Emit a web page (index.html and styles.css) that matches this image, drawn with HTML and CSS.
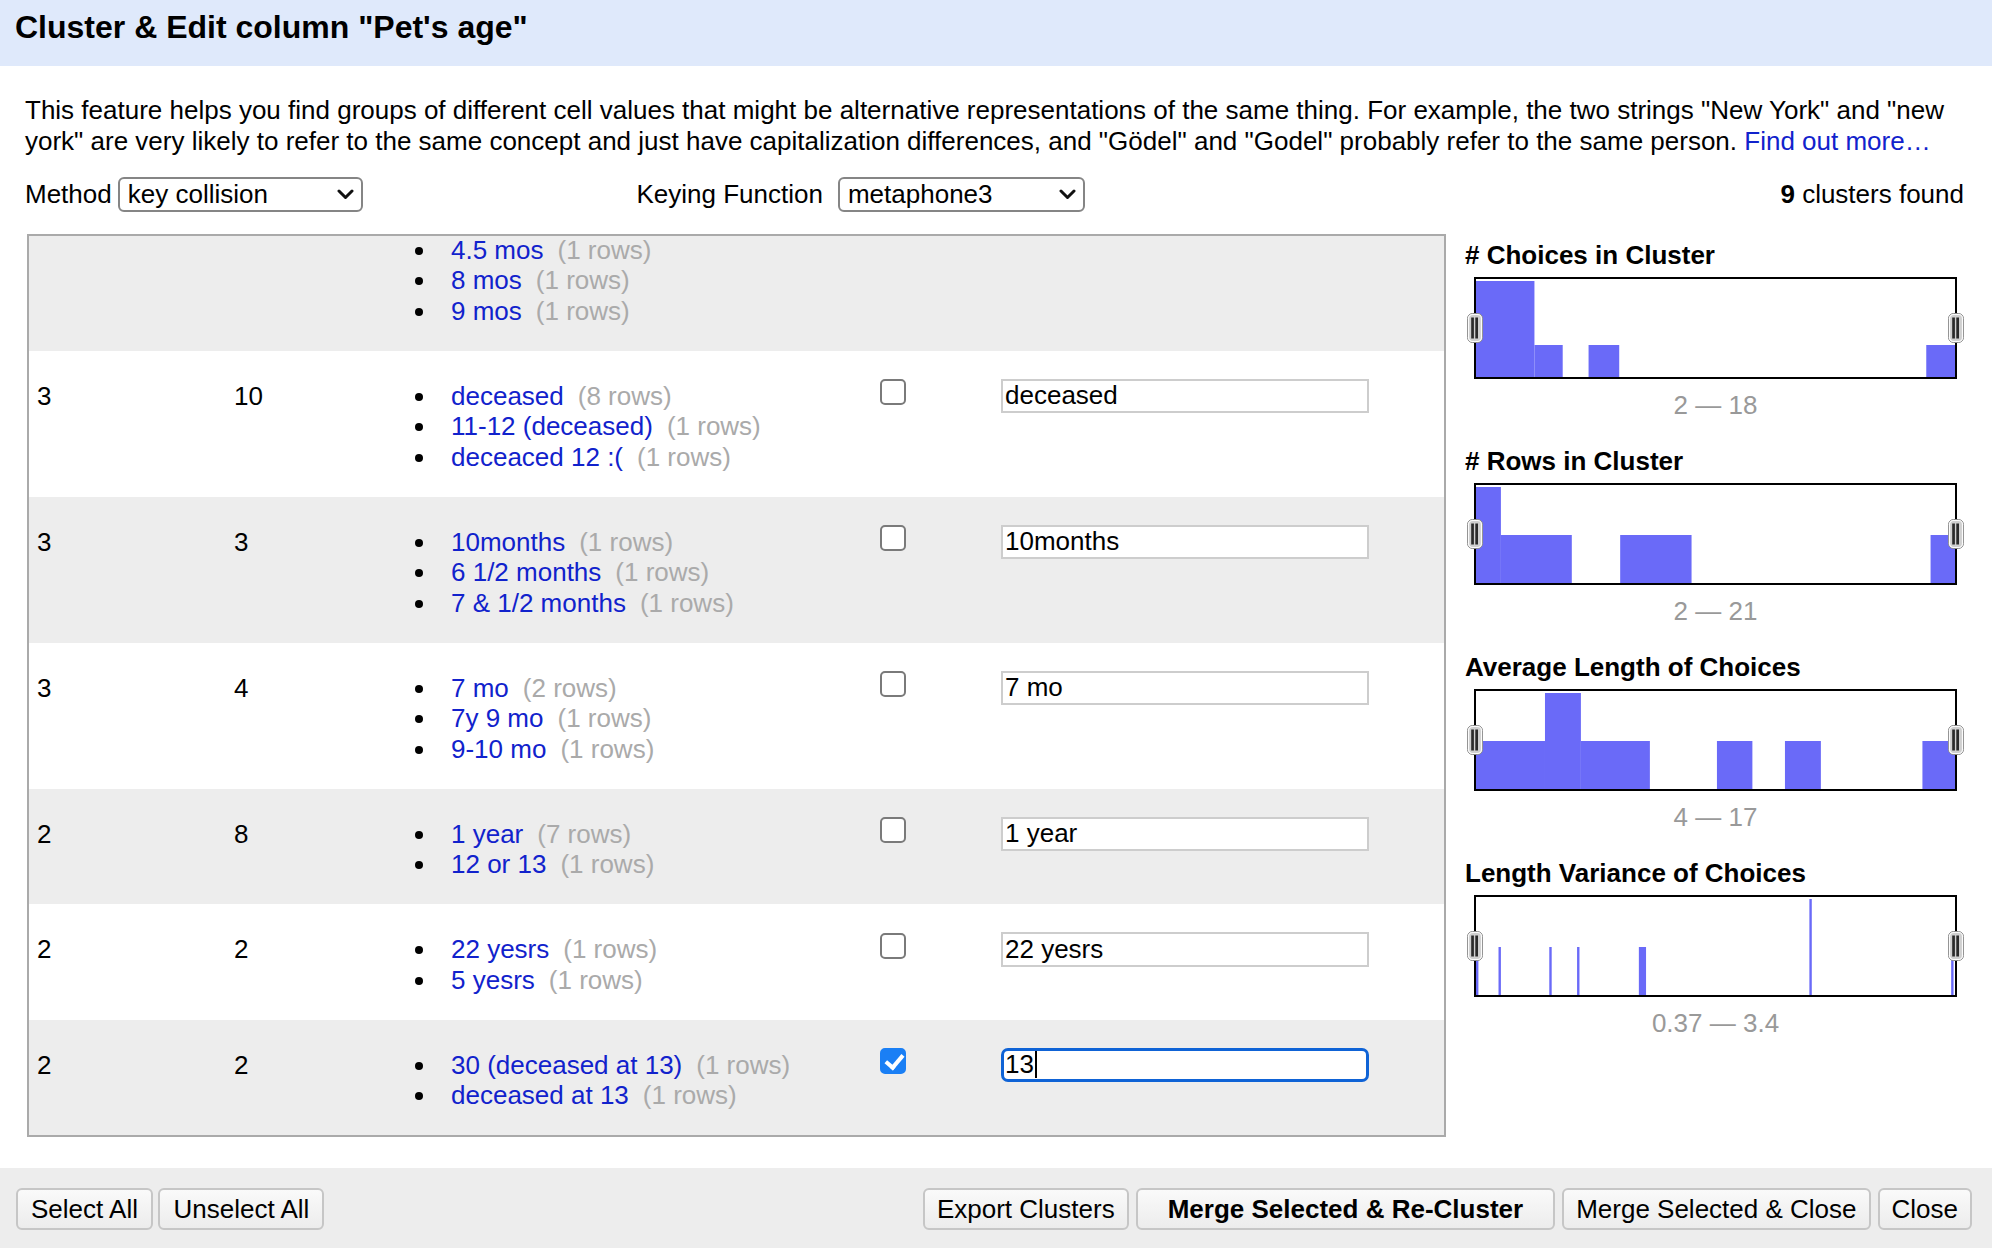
FILE: index.html
```html
<!DOCTYPE html>
<html lang="en">
<head>
<meta charset="utf-8">
<title>Cluster &amp; Edit column "Pet's age"</title>
<link rel="stylesheet" href="styles.css">
</head>
<body>
<div class="dialog">
  <header class="titlebar"><h1>Cluster &amp; Edit column "Pet's age"</h1></header>

  <div class="content">
    <p class="intro">This feature helps you find groups of different cell values that might be alternative representations of the same thing. For example, the two strings "New York" and "new york" are very likely to refer to the same concept and just have capitalization differences, and "Gödel" and "Godel" probably refer to the same person. <a href="#">Find out more…</a></p>

    <div class="controls">
      <div class="ctl ctl-method">
        <label>Method</label>
        <span class="select-wrap">
          <select class="sel sel-method"><option>key collision</option><option>nearest neighbor</option></select>
          <svg class="chev" viewBox="0 0 17 11"><path d="M2 2 L8.5 8.5 L15 2" fill="none" stroke="#111" stroke-width="3" stroke-linecap="round" stroke-linejoin="round"/></svg>
        </span>
      </div>
      <div class="ctl ctl-key">
        <label>Keying Function</label>
        <span class="select-wrap">
          <select class="sel sel-key"><option>metaphone3</option><option>fingerprint</option></select>
          <svg class="chev" viewBox="0 0 17 11"><path d="M2 2 L8.5 8.5 L15 2" fill="none" stroke="#111" stroke-width="3" stroke-linecap="round" stroke-linejoin="round"/></svg>
        </span>
      </div>
      <div class="found"><b>9</b> clusters found</div>
    </div>

    <div class="main">
      <div class="clusters">
        <table class="ctable">
          <colgroup>
            <col class="c-size"><col class="c-rows"><col class="c-vals"><col class="c-merge"><col class="c-new">
          </colgroup>
          <tbody>
            <tr class="alt">
              <td></td><td></td>
              <td><ul class="vals">
                <li><span class="v">4.5 mos</span><span class="n">(1 rows)</span></li>
                <li><span class="v">8 mos</span><span class="n">(1 rows)</span></li>
                <li><span class="v">9 mos</span><span class="n">(1 rows)</span></li>
              </ul></td>
              <td></td>
              <td></td>
            </tr>
            <tr>
              <td>3</td><td>10</td>
              <td><ul class="vals">
                <li><span class="v">deceased</span><span class="n">(8 rows)</span></li>
                <li><span class="v">11-12 (deceased)</span><span class="n">(1 rows)</span></li>
                <li><span class="v">deceaced 12 :(</span><span class="n">(1 rows)</span></li>
              </ul></td>
              <td><input type="checkbox" class="cb"></td>
              <td><input type="text" class="inp" value="deceased"></td>
            </tr>
            <tr class="alt">
              <td>3</td><td>3</td>
              <td><ul class="vals">
                <li><span class="v">10months</span><span class="n">(1 rows)</span></li>
                <li><span class="v">6 1/2 months</span><span class="n">(1 rows)</span></li>
                <li><span class="v">7 &amp; 1/2 months</span><span class="n">(1 rows)</span></li>
              </ul></td>
              <td><input type="checkbox" class="cb"></td>
              <td><input type="text" class="inp" value="10months"></td>
            </tr>
            <tr>
              <td>3</td><td>4</td>
              <td><ul class="vals">
                <li><span class="v">7 mo</span><span class="n">(2 rows)</span></li>
                <li><span class="v">7y 9 mo</span><span class="n">(1 rows)</span></li>
                <li><span class="v">9-10 mo</span><span class="n">(1 rows)</span></li>
              </ul></td>
              <td><input type="checkbox" class="cb"></td>
              <td><input type="text" class="inp" value="7 mo"></td>
            </tr>
            <tr class="alt">
              <td>2</td><td>8</td>
              <td><ul class="vals">
                <li><span class="v">1 year</span><span class="n">(7 rows)</span></li>
                <li><span class="v">12 or 13</span><span class="n">(1 rows)</span></li>
              </ul></td>
              <td><input type="checkbox" class="cb"></td>
              <td><input type="text" class="inp" value="1 year"></td>
            </tr>
            <tr>
              <td>2</td><td>2</td>
              <td><ul class="vals">
                <li><span class="v">22 yesrs</span><span class="n">(1 rows)</span></li>
                <li><span class="v">5 yesrs</span><span class="n">(1 rows)</span></li>
              </ul></td>
              <td><input type="checkbox" class="cb"></td>
              <td><input type="text" class="inp" value="22 yesrs"></td>
            </tr>
            <tr class="alt">
              <td>2</td><td>2</td>
              <td><ul class="vals">
                <li><span class="v">30 (deceased at 13)</span><span class="n">(1 rows)</span></li>
                <li><span class="v">deceased at 13</span><span class="n">(1 rows)</span></li>
              </ul></td>
              <td><input type="checkbox" class="cb" checked></td>
              <td><span class="inp inp-focus">13<span class="caret"></span></span></td>
            </tr>
          </tbody>
        </table>
      </div>

      <aside class="facets">
        <section class="facet">
          <h3># Choices in Cluster</h3>
          <div class="hist">
            <svg class="bars" viewBox="0 0 1000 98" preserveAspectRatio="none">
              <rect x="0" y="2" width="122" height="96"/>
              <rect x="122" y="66" width="59" height="32"/>
              <rect x="235" y="66" width="64" height="32"/>
              <rect x="940" y="66" width="60" height="32"/>
            </svg>
            <svg class="handle hl" viewBox="0 0 16 30"><rect x="0.5" y="0.5" width="15" height="29" rx="5" fill="#cfcfcf" stroke="#8a8a8a"/><rect x="1.5" y="1.5" width="13" height="27" rx="4" fill="none" stroke="#fbfbfb" stroke-width="1.2"/><rect x="4.2" y="4.5" width="2.7" height="21" fill="#2a2a2a"/><rect x="8.3" y="4.5" width="2.7" height="21" fill="#2a2a2a"/></svg>
            <svg class="handle hr" viewBox="0 0 16 30"><rect x="0.5" y="0.5" width="15" height="29" rx="5" fill="#cfcfcf" stroke="#8a8a8a"/><rect x="1.5" y="1.5" width="13" height="27" rx="4" fill="none" stroke="#fbfbfb" stroke-width="1.2"/><rect x="4.2" y="4.5" width="2.7" height="21" fill="#2a2a2a"/><rect x="8.3" y="4.5" width="2.7" height="21" fill="#2a2a2a"/></svg>
          </div>
          <div class="range">2 — 18</div>
        </section>

        <section class="facet">
          <h3># Rows in Cluster</h3>
          <div class="hist">
            <svg class="bars" viewBox="0 0 1000 98" preserveAspectRatio="none">
              <rect x="0" y="2" width="52" height="96"/>
              <rect x="52" y="50" width="148" height="48"/>
              <rect x="301" y="50" width="149" height="48"/>
              <rect x="949" y="50" width="51" height="48"/>
            </svg>
            <svg class="handle hl" viewBox="0 0 16 30"><rect x="0.5" y="0.5" width="15" height="29" rx="5" fill="#cfcfcf" stroke="#8a8a8a"/><rect x="1.5" y="1.5" width="13" height="27" rx="4" fill="none" stroke="#fbfbfb" stroke-width="1.2"/><rect x="4.2" y="4.5" width="2.7" height="21" fill="#2a2a2a"/><rect x="8.3" y="4.5" width="2.7" height="21" fill="#2a2a2a"/></svg>
            <svg class="handle hr" viewBox="0 0 16 30"><rect x="0.5" y="0.5" width="15" height="29" rx="5" fill="#cfcfcf" stroke="#8a8a8a"/><rect x="1.5" y="1.5" width="13" height="27" rx="4" fill="none" stroke="#fbfbfb" stroke-width="1.2"/><rect x="4.2" y="4.5" width="2.7" height="21" fill="#2a2a2a"/><rect x="8.3" y="4.5" width="2.7" height="21" fill="#2a2a2a"/></svg>
          </div>
          <div class="range">2 — 21</div>
        </section>

        <section class="facet">
          <h3>Average Length of Choices</h3>
          <div class="hist">
            <svg class="bars" viewBox="0 0 1000 98" preserveAspectRatio="none">
              <rect x="0" y="50" width="144" height="48"/>
              <rect x="144" y="2" width="75" height="96"/>
              <rect x="219" y="50" width="144" height="48"/>
              <rect x="503" y="50" width="74" height="48"/>
              <rect x="645" y="50" width="75" height="48"/>
              <rect x="932" y="50" width="68" height="48"/>
            </svg>
            <svg class="handle hl" viewBox="0 0 16 30"><rect x="0.5" y="0.5" width="15" height="29" rx="5" fill="#cfcfcf" stroke="#8a8a8a"/><rect x="1.5" y="1.5" width="13" height="27" rx="4" fill="none" stroke="#fbfbfb" stroke-width="1.2"/><rect x="4.2" y="4.5" width="2.7" height="21" fill="#2a2a2a"/><rect x="8.3" y="4.5" width="2.7" height="21" fill="#2a2a2a"/></svg>
            <svg class="handle hr" viewBox="0 0 16 30"><rect x="0.5" y="0.5" width="15" height="29" rx="5" fill="#cfcfcf" stroke="#8a8a8a"/><rect x="1.5" y="1.5" width="13" height="27" rx="4" fill="none" stroke="#fbfbfb" stroke-width="1.2"/><rect x="4.2" y="4.5" width="2.7" height="21" fill="#2a2a2a"/><rect x="8.3" y="4.5" width="2.7" height="21" fill="#2a2a2a"/></svg>
          </div>
          <div class="range">4 — 17</div>
        </section>

        <section class="facet">
          <h3>Length Variance of Choices</h3>
          <div class="hist">
            <svg class="bars" viewBox="0 0 1000 98" preserveAspectRatio="none">
              <rect x="0" y="50" width="5" height="48"/>
              <rect x="47" y="50" width="5" height="48"/>
              <rect x="153" y="50" width="5" height="48"/>
              <rect x="211" y="50" width="5" height="48"/>
              <rect x="340" y="50" width="15" height="48"/>
              <rect x="696" y="2" width="5" height="96"/>
              <rect x="992" y="50" width="5" height="48"/>
            </svg>
            <svg class="handle hl" viewBox="0 0 16 30"><rect x="0.5" y="0.5" width="15" height="29" rx="5" fill="#cfcfcf" stroke="#8a8a8a"/><rect x="1.5" y="1.5" width="13" height="27" rx="4" fill="none" stroke="#fbfbfb" stroke-width="1.2"/><rect x="4.2" y="4.5" width="2.7" height="21" fill="#2a2a2a"/><rect x="8.3" y="4.5" width="2.7" height="21" fill="#2a2a2a"/></svg>
            <svg class="handle hr" viewBox="0 0 16 30"><rect x="0.5" y="0.5" width="15" height="29" rx="5" fill="#cfcfcf" stroke="#8a8a8a"/><rect x="1.5" y="1.5" width="13" height="27" rx="4" fill="none" stroke="#fbfbfb" stroke-width="1.2"/><rect x="4.2" y="4.5" width="2.7" height="21" fill="#2a2a2a"/><rect x="8.3" y="4.5" width="2.7" height="21" fill="#2a2a2a"/></svg>
          </div>
          <div class="range">0.37 — 3.4</div>
        </section>
      </aside>
    </div>
  </div>

  <footer class="footer">
    <div class="btn-group">
      <button class="btn btn-wide">Select All</button>
      <button class="btn btn-wide">Unselect All</button>
    </div>
    <div class="btn-group btn-group-right">
      <button class="btn">Export Clusters</button>
      <button class="btn btn-primary">Merge Selected &amp; Re-Cluster</button>
      <button class="btn">Merge Selected &amp; Close</button>
      <button class="btn">Close</button>
    </div>
  </footer>
</div>
</body>
</html>
```

FILE: styles.css
```css
* { box-sizing: border-box; }

html, body {
  margin: 0;
  padding: 0;
}

body {
  width: 1992px;
  height: 1248px;
  overflow: hidden;
  background: #fff;
  color: #000;
  font-family: "Liberation Sans", Arial, Helvetica, sans-serif;
  font-size: 26px;
}

.dialog {
  display: flex;
  flex-direction: column;
  height: 1248px;
}

/* title bar */
.titlebar {
  height: 66px;
  flex: none;
  background: #dfe9fb;
  padding: 8px 15px 0;
}
.titlebar h1 {
  margin: 0;
  font-size: 32px;
  line-height: 38px;
  font-weight: bold;
}

/* body */
.content {
  flex: 1;
  padding: 29px 28px 0 25px;
  display: flex;
  flex-direction: column;
}

.intro {
  margin: 0;
  line-height: 30.5px;
}
.intro a {
  color: #1122cc;
  text-decoration: none;
}

.controls {
  margin-top: 20.5px;
  height: 35.5px;
  display: grid;
  grid-template-columns: 611.5px auto 1fr;
  align-items: center;
}
.ctl {
  display: flex;
  align-items: center;
}
.ctl-method label { margin-right: 6px; }
.ctl-key label { margin-right: 15px; }
.found { justify-self: end; }

.select-wrap {
  position: relative;
  display: inline-block;
}
.sel {
  -webkit-appearance: none;
  appearance: none;
  display: block;
  font: inherit;
  color: #000;
  height: 35.5px;
  border: 2px solid #858585;
  border-radius: 6px;
  background: #fff;
  padding: 0 0 0 8px;
  margin: 0;
}
.sel-method { width: 245px; }
.sel-key { width: 247px; }
.chev {
  position: absolute;
  right: 9px;
  top: 50%;
  width: 17px;
  height: 11px;
  margin-top: -5px;
  pointer-events: none;
}

/* main area */
.main {
  margin: 22px 0 0 2px;
  height: 903px;
  display: flex;
}

.clusters {
  flex: none;
  width: 1419px;
  height: 903px;
  border: 2px solid #aaa;
  overflow: hidden;
  display: flex;
  flex-direction: column;
  justify-content: flex-end;
}

.ctable {
  flex: none;
  width: 100%;
  border-collapse: collapse;
  border-spacing: 0;
  table-layout: fixed;
}
.c-size { width: 197px; }
.c-rows { width: 177px; }
.c-vals { width: 469px; }
.c-merge { width: 121px; }
.c-new { width: 451px; }

.ctable td {
  vertical-align: top;
  padding: 30px 8px 24.5px;
  line-height: 30.5px;
}
.ctable tr.alt { background: #ededed; }

.vals {
  margin: 0;
  padding-left: 40px;
  list-style: none;
}
.vals li {
  position: relative;
}
.vals li::before {
  content: "";
  position: absolute;
  left: -36px;
  top: 12px;
  width: 8px;
  height: 8px;
  border-radius: 50%;
  background: #000;
}
.v { color: #1122cc; }
.n { color: #aaa; margin-left: 14px; }

.cb {
  -webkit-appearance: none;
  appearance: none;
  position: relative;
  display: block;
  width: 26px;
  height: 26px;
  margin: -1.5px 0 0 0;
  border: 2px solid #7a7a7a;
  border-radius: 5px;
  background: #fff;
}
.cb:checked {
  background: #1a7ff5;
  border-color: #1a7ff5;
}
.cb:checked::after {
  content: "";
  position: absolute;
  left: 7px;
  top: 1px;
  width: 7px;
  height: 14px;
  border: solid #fff;
  border-width: 0 4px 4px 0;
  transform: rotate(40deg);
}

.inp {
  display: block;
  width: 368px;
  height: 34.5px;
  margin: -2px 0 0 0;
  padding: 0 0 0 2px;
  border: 2px solid #cdcdcd;
  background: #fff;
  font: inherit;
  color: #000;
  line-height: 30.5px;
  outline: none;
}
.inp-focus {
  border: 3.5px solid #0f63d6;
  border-radius: 7px;
  padding-left: 1px;
  line-height: 27.5px;
}
.caret {
  display: inline-block;
  width: 2px;
  height: 27px;
  margin-left: 1px;
  background: #000;
  vertical-align: -5px;
}

/* facets */
.facets {
  flex: 1;
  margin-left: 19px;
  padding-top: 6px;
}
.facet {
  margin-bottom: 26px;
}
.facet h3 {
  margin: 0;
  font-size: 26px;
  line-height: 30px;
  font-weight: bold;
}
.hist {
  position: relative;
  margin: 7px 7px 0 9px;
  height: 102px;
  border: 2px solid #000;
  background: #fff;
}
.bars {
  display: block;
  width: 100%;
  height: 100%;
  fill: #6a6af8;
}
.handle {
  position: absolute;
  top: 50%;
  width: 16px;
  height: 30px;
  margin-top: -15px;
}
.hl { left: -9px; }
.hr { right: -9px; }

.range {
  margin: 11px 7px 0 9px;
  text-align: center;
  color: #999;
  line-height: 30px;
}

/* footer */
.footer {
  flex: none;
  height: 80.5px;
  background: #ededed;
  padding: 20.5px 20px 0 16px;
  display: flex;
}
.btn-group {
  display: flex;
  gap: 5.5px;
}
.btn-group-right {
  margin-left: auto;
  gap: 7px;
}
.btn {
  height: 42px;
  margin: 0;
  padding: 0 12px;
  font: inherit;
  color: #000;
  border: 2px solid #c6c6c6;
  border-radius: 6px;
  background: linear-gradient(#fafafa, #ececec);
}
.btn-wide {
  padding: 0 13px;
}
.btn-primary {
  font-weight: bold;
  padding: 0 30px;
}
```
